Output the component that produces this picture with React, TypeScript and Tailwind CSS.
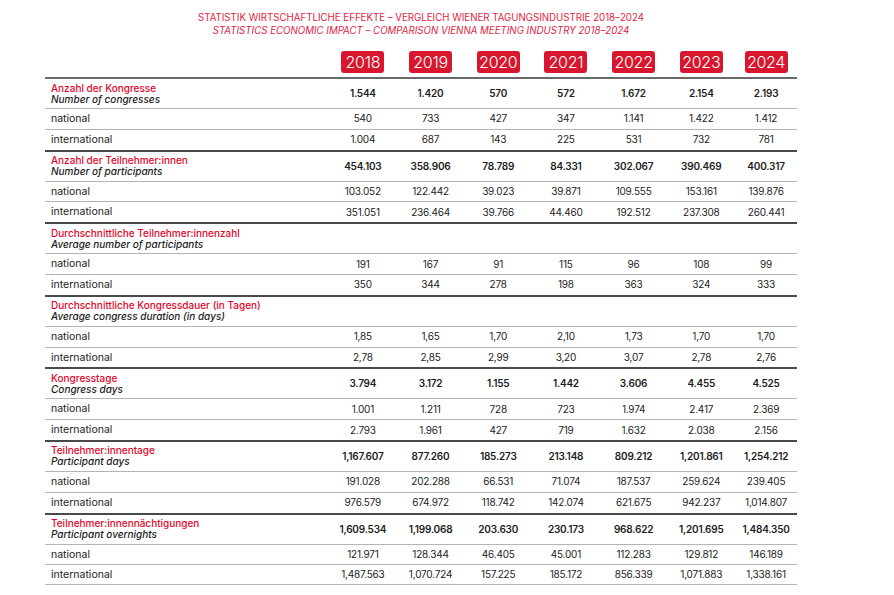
import React from 'react';

interface Section {
  de: string;
  en: string;
  total: string[] | null;
  national: string[];
  international: string[];
}

const years = ['2018', '2019', '2020', '2021', '2022', '2023', '2024'];

const sections: Section[] = [
  {
    de: 'Anzahl der Kongresse',
    en: 'Number of congresses',
    total: ['1.544', '1.420', '570', '572', '1.672', '2.154', '2.193'],
    national: ['540', '733', '427', '347', '1.141', '1.422', '1.412'],
    international: ['1.004', '687', '143', '225', '531', '732', '781'],
  },
  {
    de: 'Anzahl der Teilnehmer:innen',
    en: 'Number of participants',
    total: ['454.103', '358.906', '78.789', '84.331', '302.067', '390.469', '400.317'],
    national: ['103.052', '122.442', '39.023', '39.871', '109.555', '153.161', '139.876'],
    international: ['351.051', '236.464', '39.766', '44.460', '192.512', '237.308', '260.441'],
  },
  {
    de: 'Durchschnittliche Teilnehmer:innenzahl',
    en: 'Average number of participants',
    total: null,
    national: ['191', '167', '91', '115', '96', '108', '99'],
    international: ['350', '344', '278', '198', '363', '324', '333'],
  },
  {
    de: 'Durchschnittliche Kongressdauer (in Tagen)',
    en: 'Average congress duration (in days)',
    total: null,
    national: ['1,85', '1,65', '1,70', '2,10', '1,73', '1,70', '1,70'],
    international: ['2,78', '2,85', '2,99', '3,20', '3,07', '2,78', '2,76'],
  },
  {
    de: 'Kongresstage',
    en: 'Congress days',
    total: ['3.794', '3.172', '1.155', '1.442', '3.606', '4.455', '4.525'],
    national: ['1.001', '1.211', '728', '723', '1.974', '2.417', '2.369'],
    international: ['2.793', '1.961', '427', '719', '1.632', '2.038', '2.156'],
  },
  {
    de: 'Teilnehmer:innentage',
    en: 'Participant days',
    total: ['1,167.607', '877.260', '185.273', '213.148', '809.212', '1,201.861', '1,254.212'],
    national: ['191.028', '202.288', '66.531', '71.074', '187.537', '259.624', '239.405'],
    international: ['976.579', '674.972', '118.742', '142.074', '621.675', '942.237', '1,014.807'],
  },
  {
    de: 'Teilnehmer:innennächtigungen',
    en: 'Participant overnights',
    total: ['1,609.534', '1,199.068', '203.630', '230.173', '968.622', '1,201.695', '1,484.350'],
    national: ['121.971', '128.344', '46.405', '45.001', '112.283', '129.812', '146.189'],
    international: ['1,487.563', '1,070.724', '157.225', '185.172', '856.339', '1,071.883', '1,338.161'],
  },
];

const gridCols = 'grid grid-cols-[284px_repeat(6,67.7px)_1fr] items-center';

const DataRow = ({ label, values, last }: { label: string; values: string[]; last?: boolean }) => (
  <div className={`${gridCols} h-[20.8px] border-t border-[#b4b4b4] ${last ? 'border-b' : ''}`}>
    <div className="pl-[6px] text-[10.5px] text-[#1c1c1c]">{label}</div>
    {values.map((v, i) => (
      <div key={i} className="text-center text-[10px] text-[#1c1c1c] tracking-[-0.2px]">
        {v}
      </div>
    ))}
  </div>
);

export default function App() {
  return (
    <div className="min-h-screen bg-white font-['Inter',sans-serif]">
      <div className="ml-[45px] w-[752px] pt-[11px]">
        {/* Title */}
        <div className="text-center text-[9.7px] leading-[13px] text-[#e1243f]">
          <p>STATISTIK WIRTSCHAFTLICHE EFFEKTE – VERGLEICH WIENER TAGUNGSINDUSTRIE 2018–2024</p>
          <p className="italic">STATISTICS ECONOMIC IMPACT – COMPARISON VIENNA MEETING INDUSTRY 2018–2024</p>
        </div>

        {/* Year badges */}
        <div className={`${gridCols} mt-[14px] pb-[4px]`}>
          <div />
          {years.map((y) => (
            <div key={y} className="flex justify-center">
              <span className="flex h-[22px] w-[43px] items-center justify-center rounded-[3px] bg-[#d8172f] text-[16px] font-light tracking-[-0.3px] text-white">
                {y}
              </span>
            </div>
          ))}
        </div>

        {/* Sections */}
        {sections.map((s, idx) => (
          <div key={s.de} className={`border-t-2 ${idx === 0 ? 'border-[#6a6a6a]' : 'border-[#4a4a4a]'}`}>
            <div className={`${gridCols} h-[29px]`}>
              <div className="pl-[6px] text-[10px] leading-[11px] font-medium">
                <div className="text-[#e2062c]">{s.de}</div>
                <div className="italic text-[#1c1c1c]">{s.en}</div>
              </div>
              {(s.total ?? []).map((v, i) => (
                <div key={i} className="text-center text-[10px] font-semibold text-[#1c1c1c] tracking-[-0.2px]">
                  {v}
                </div>
              ))}
            </div>
            <DataRow label="national" values={s.national} />
            <DataRow label="international" values={s.international} last={idx === sections.length - 1} />
          </div>
        ))}
      </div>
    </div>
  );
}
